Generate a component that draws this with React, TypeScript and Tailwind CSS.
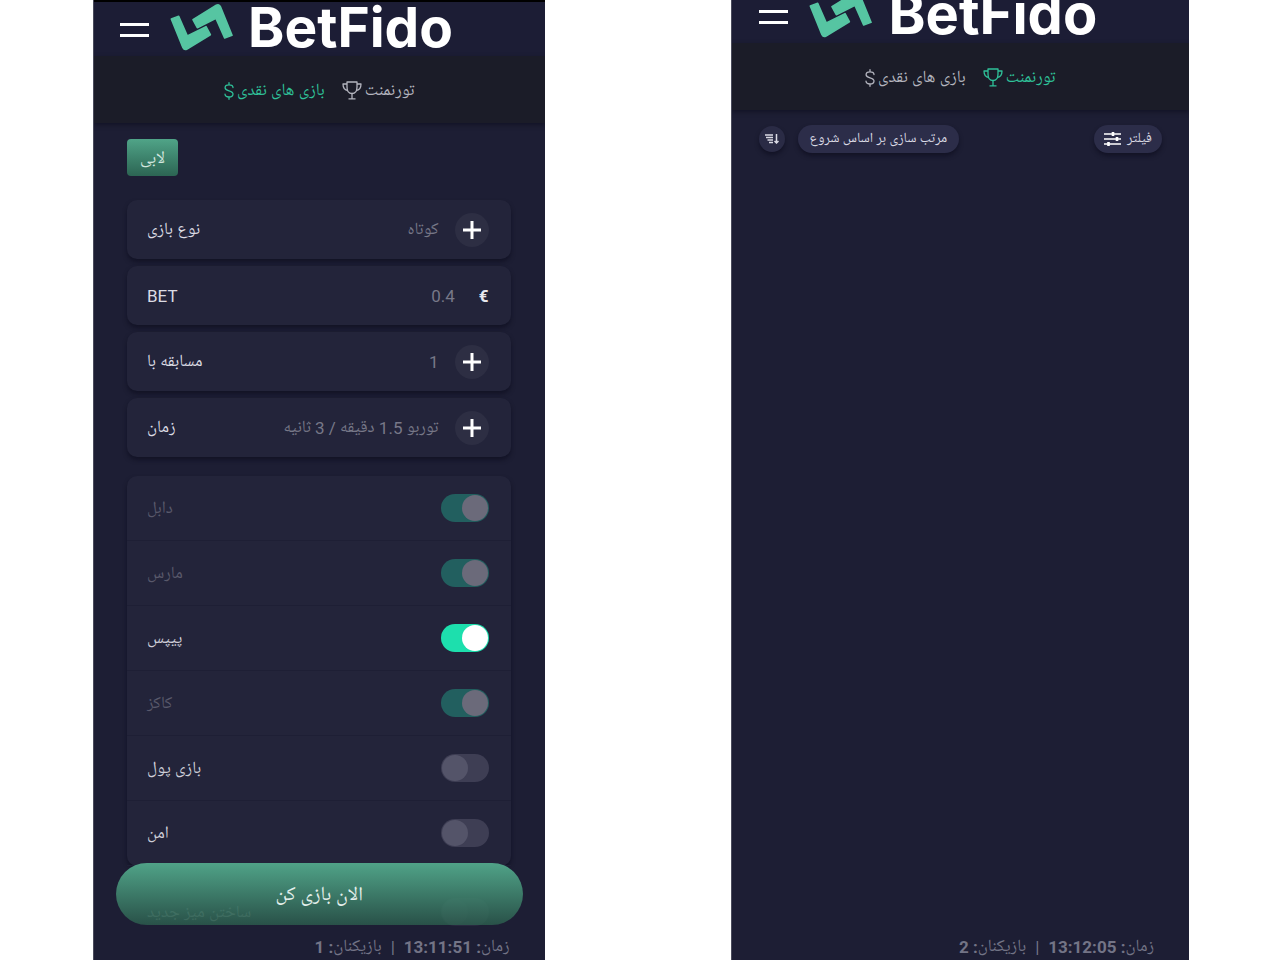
import { useId } from "react";

function LogoMark() {
  return (
    <svg viewBox="0 6 216 162" className="h-[54px] w-[72px] shrink-0" aria-hidden="true">
      <g fill="#56c5a2" stroke="#56c5a2" strokeWidth="5" strokeLinejoin="round">
        <path d="M16 57 L38 49 L64 108 L120 80 L133 104 L63 147 Q55 151 51 143 Z" />
        <path d="M198 106 L176 114 L150 55 L94 83 L81 59 L151 16 Q159 12 163 20 Z" />
      </g>
    </svg>
  );
}

function Brand({ large }: { large?: boolean }) {
  return (
    <a
      href="#home"
      className={
        large
          ? "flex items-start gap-3 self-start text-[56px] leading-[50px]"
          : "flex items-start gap-[10px] self-start text-[55px] leading-[50px]"
      }
    >
      <LogoMark />
      <span className="font-['Inter',sans-serif] font-bold text-white">BetFido</span>
    </a>
  );
}

function MenuButton() {
  return (
    <button type="button" aria-label="منو" className="flex w-[29px] flex-col gap-2 pt-[10px] pb-2">
      <span className="h-[3px] w-full bg-white" />
      <span className="h-[3px] w-full bg-white" />
    </button>
  );
}

function Trophy() {
  return (
    <svg viewBox="0 0 20 19" className="h-[19px] w-5" fill="none" stroke="currentColor" strokeWidth="1.3" aria-hidden="true">
      <path d="M5 1 H15 V6 C15 10 13 12.5 10 12.5 C7 12.5 5 10 5 6 Z" strokeLinejoin="round" />
      <path d="M5 3 H1 C1 7 3 9.3 6 9.5 M15 3 H19 C19 7 17 9.3 14 9.5" strokeLinejoin="round" />
      <path d="M10 12.5 V17.5 M6.5 17.8 H13.5" />
    </svg>
  );
}

function Dollar() {
  return (
    <svg viewBox="0 0 10 18" className="h-[18px] w-[10px]" fill="none" stroke="currentColor" strokeWidth="1.3" strokeLinecap="round" aria-hidden="true">
      <path d="M9 5.6 C9 3.8 7.4 2.9 5 2.9 C2.6 2.9 1.1 4 1.1 5.7 C1.1 9.6 9 8 9 12 C9 13.9 7.4 15 5 15 C2.5 15 1 13.9 1 12.1 M5 .7 V2.9 M5 15 V17.3" />
    </svg>
  );
}

function GameNav({ active }: { active: "cash" | "tournament" }) {
  const on = "flex items-center gap-[3px] text-[#2fc199]";
  const off = "flex items-center gap-[3px] text-[#b4b5bf]";
  return (
    <nav className="flex h-[67px] items-center justify-center gap-[17px] bg-[#1b1c28] pt-0.5 text-[17px] leading-6 shadow-[0_2px_4px_rgba(10,10,24,0.5)]">
      <a href="#cash" className={active === "cash" ? on : off}>
        <Dollar />
        <span dir="rtl">بازی های نقدی</span>
      </a>
      <a href="#tournament" className={active === "tournament" ? on : off}>
        <Trophy />
        <span dir="rtl">تورنمنت</span>
      </a>
    </nav>
  );
}

function Plus({ label }: { label: string }) {
  return (
    <button type="button" aria-label={label} className="flex size-[34px] items-center justify-center rounded-full bg-[#2d2e43] text-white">
      <svg viewBox="0 0 18 18" className="size-[18px]" stroke="currentColor" strokeWidth="3" aria-hidden="true">
        <path d="M9 0 V18 M0 9 H18" />
      </svg>
    </button>
  );
}

function SettingCard({ label, value, euro }: { label: string; value: string; euro?: boolean }) {
  return (
    <div className="flex h-[59px] items-center rounded-[10px] bg-[#23243a] pr-[22px] pl-5 text-[17px] leading-6 shadow-[0_3px_4px_rgba(12,12,28,0.6)]">
      <span dir="auto" className="grow text-left text-[#dcdce4]">{label}</span>
      <span dir="auto" className="text-[#777888]">{value}</span>
      {euro ? (
        <span className="ml-6 font-bold text-[#e8e8ee]">€</span>
      ) : (
        <span className="ml-4 flex">
          <Plus label={label} />
        </span>
      )}
    </div>
  );
}

type ToggleProps = { label: string; checked?: boolean; disabled?: boolean };

function Toggle({ label, checked, disabled }: ToggleProps) {
  const id = useId();
  return (
    <div className="flex h-full items-center justify-between pr-[22px] pl-5 text-[17px] leading-6">
      <label htmlFor={id} dir="rtl" className={disabled ? "pt-0.5 text-[#59596b]" : "pt-0.5 text-[#cfcfd9]"}>
        {label}
      </label>
      <input
        id={id}
        type="checkbox"
        defaultChecked={checked}
        disabled={disabled}
        className="flex h-7 w-12 appearance-none items-center rounded-full bg-[#3e3e54] px-px before:size-[26px] before:rounded-full before:bg-[#545469] checked:justify-end checked:bg-[#1ddfad] checked:before:bg-white disabled:bg-[#28293f] disabled:before:bg-[#2d2e44] checked:disabled:bg-[#225f5f] checked:disabled:before:bg-[#6b6a7a]"
      />
    </div>
  );
}

const settings = [
  { label: "نوع بازی", value: "کوتاه" },
  { label: "BET", value: "0.4", euro: true },
  { label: "مسابقه با", value: "1" },
  { label: "زمان", value: "توربو 1.5 دقیقه / 3 ثانیه" },
];

const toggles: ToggleProps[] = [
  { label: "دابل", checked: true, disabled: true },
  { label: "مارس", checked: true, disabled: true },
  { label: "پیپس", checked: true },
  { label: "کاکز", checked: true, disabled: true },
  { label: "بازی پول" },
  { label: "امن" },
];

function StatusBar({ time, players }: { time: string; players: number }) {
  return (
    <footer dir="rtl" className="flex h-[25px] items-start gap-[9px] px-[35px] text-[17px] leading-6 text-[#737486]">
      <span>زمان<b>: {time}</b></span>
      <span>|</span>
      <span>بازیکنان<b>: {players}</b></span>
    </footer>
  );
}

function CashGame() {
  return (
    <section className="relative flex min-h-screen min-w-0 flex-[451] flex-col overflow-x-clip border-l border-[#4a4b5c] bg-[#1d1e34]">
      <header className="flex h-14 items-center gap-[17px] border-t-2 border-black bg-[#1c1d35] pl-[26px]">
        <MenuButton />
        <Brand />
      </header>
      <GameNav active="cash" />
      <main className="flex grow flex-col pt-4 pr-[34px] pl-[33px]">
        <button type="button" dir="rtl" className="h-[37px] w-[51px] self-start rounded bg-linear-to-b from-[#50a488] to-[#2c6553] pt-0.5 text-[17px] leading-6 text-[#d3e6df]">
          لابی
        </button>
        <div className="mt-6 flex flex-col gap-[7px]">
          {settings.map((s) => (
            <SettingCard key={s.label} {...s} />
          ))}
        </div>
        <div className="mt-[19px] rounded-[10px] bg-[#23243a] shadow-[0_3px_4px_rgba(12,12,28,0.6)]">
          {toggles.map((t) => (
            <div key={t.label} className="h-[65px] border-b border-[#1e1f35]">
              <Toggle {...t} />
            </div>
          ))}
        </div>
        <div className="mt-[23px] h-[46px]">
          <Toggle label="ساختن میز جدید" disabled />
        </div>
      </main>
      <StatusBar time="13:11:51" players={1} />
      <button
        type="button"
        dir="rtl"
        className="absolute inset-x-[22px] bottom-[35px] h-[62px] rounded-full bg-linear-to-b from-[#50a388] to-[#2e6751]/70 pt-1 text-[20px] leading-7 text-[#e3efeb]"
      >
        الان بازی کن
      </button>
    </section>
  );
}

function Tournament() {
  return (
    <section className="flex min-h-screen min-w-0 flex-[458] flex-col overflow-x-clip border-l border-[#4a4b5c] bg-[#1d1e34]">
      <header className="flex h-[43px] items-end bg-[#1c1d35] pl-[27px]">
        <div className="flex h-[54px] items-center gap-[17px]">
          <MenuButton />
          <Brand large />
        </div>
      </header>
      <GameNav active="tournament" />
      <main className="flex grow items-start px-[27px] pt-[15px] text-[14px] leading-5 text-[#dadae4]">
        <button type="button" aria-label="ترتیب" className="mt-px flex size-[26px] items-center justify-center rounded-full bg-[#2a2b45] shadow-[0_3px_4px_rgba(12,12,28,0.6)]">
          <svg viewBox="0 0 14 10" className="h-[10px] w-[14px]" fill="none" stroke="currentColor" strokeWidth="1.5" aria-hidden="true">
            <path d="M0 1 H8 M1 3.5 H8 M2.5 6 H8 M4 8.5 H8" />
            <path d="M11.5 0 V9 M9.5 7 L11.5 9 L13.5 7" />
          </svg>
        </button>
        <button type="button" dir="rtl" className="ml-[13px] h-7 rounded-full bg-[#2c2d49] px-3 shadow-[0_3px_4px_rgba(12,12,28,0.6)]">
          مرتب سازی بر اساس شروع
        </button>
        <button type="button" className="ml-auto flex h-7 items-center gap-[5px] rounded-full bg-[#2c2d49] px-[10px] shadow-[0_3px_4px_rgba(12,12,28,0.6)]">
          <svg viewBox="0 0 18 14" className="h-[14px] w-[18px]" stroke="#fff" strokeWidth="1.7" aria-hidden="true">
            <path d="M0 2 H17 M0 7 H17 M0 12 H17" />
            <path d="M9 0 V4 M13 5 V9 M4.5 10 V14" strokeWidth="2.6" />
          </svg>
          <span dir="rtl">فیلتر</span>
        </button>
      </main>
      <StatusBar time="13:12:05" players={2} />
    </section>
  );
}

export default function App() {
  return (
    <div className="flex min-h-screen justify-between gap-[186px] bg-white pr-[91px] pl-[93px] font-['Roboto','Noto_Naskh_Arabic_UI',sans-serif]">
      <CashGame />
      <Tournament />
    </div>
  );
}
